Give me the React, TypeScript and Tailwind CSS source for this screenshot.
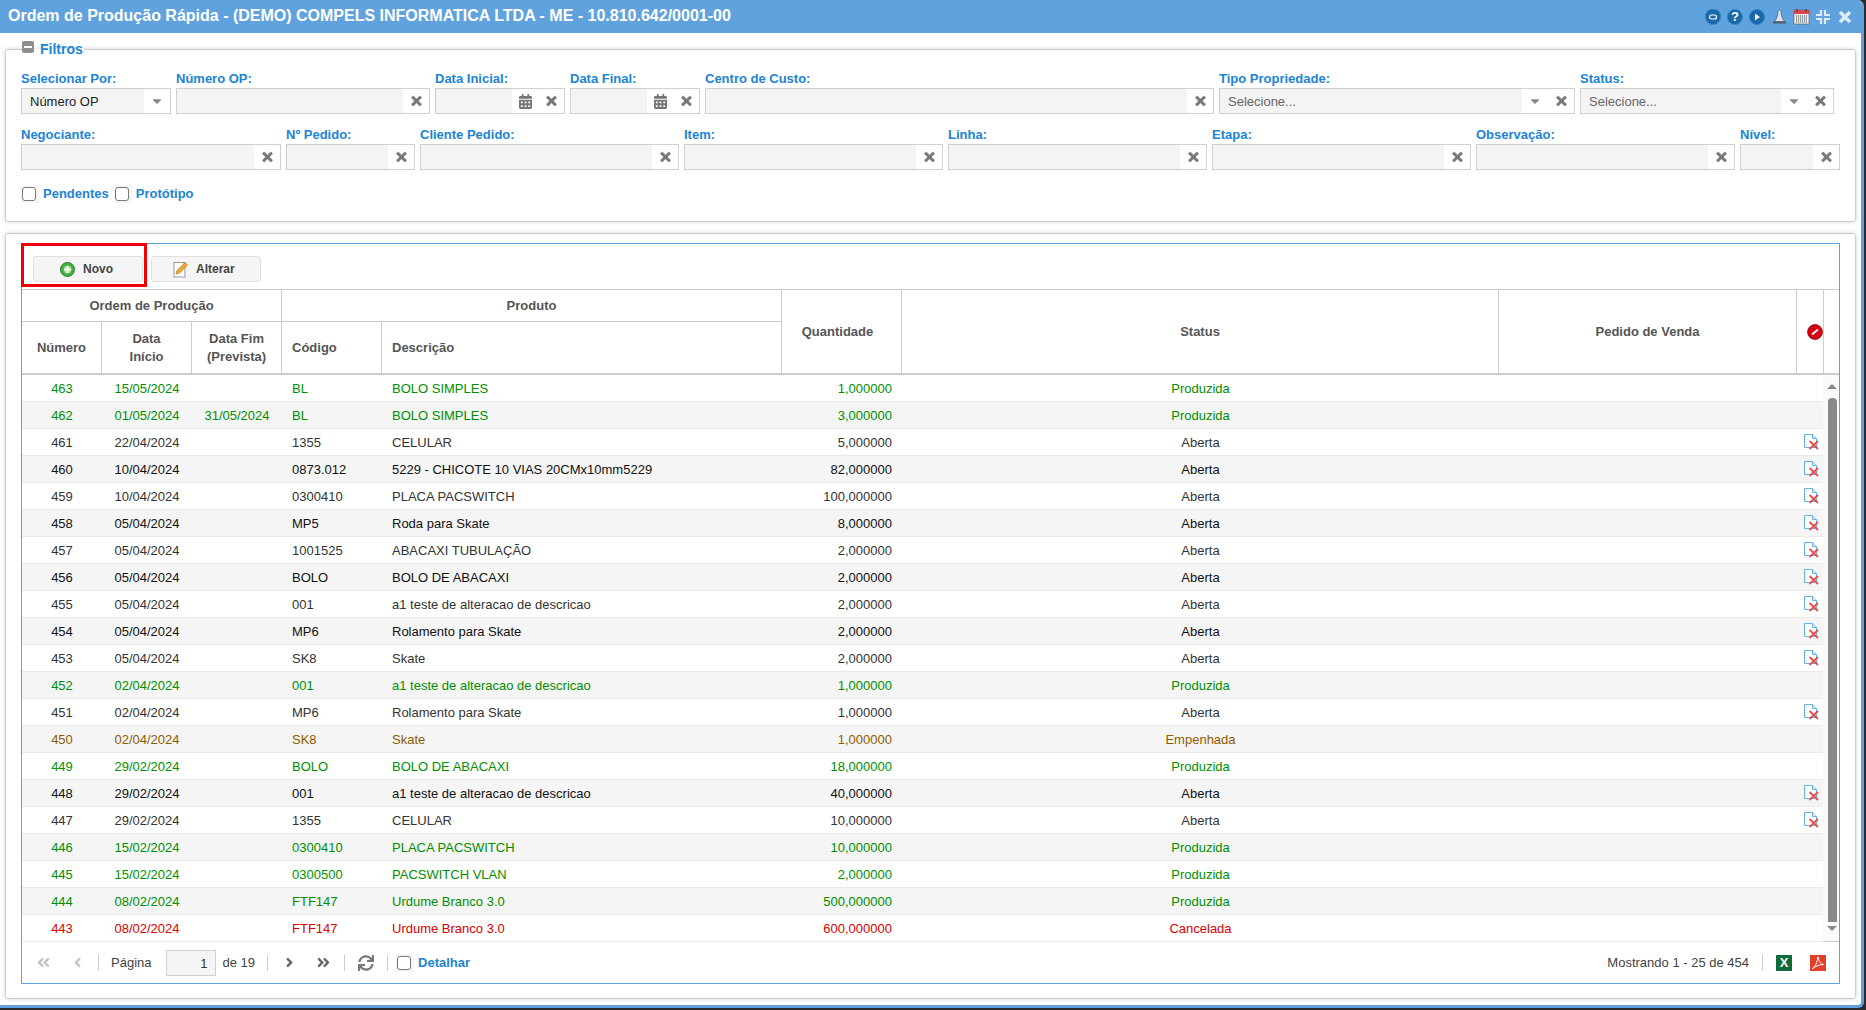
import React from 'react';
import {
  FaAngleDoubleLeft,
  FaAngleDoubleRight,
  FaAngleLeft,
  FaAngleRight,
  FaCalendarAlt,
  FaCaretDown,
  FaSync,
  FaTimes,
} from 'react-icons/fa';

type Row = [string, string, string, string, string, string, string];

const ROWS: Row[] = [
  ['463', '15/05/2024', '', 'BL', 'BOLO SIMPLES', '1,000000', 'Produzida'],
  ['462', '01/05/2024', '31/05/2024', 'BL', 'BOLO SIMPLES', '3,000000', 'Produzida'],
  ['461', '22/04/2024', '', '1355', 'CELULAR', '5,000000', 'Aberta'],
  ['460', '10/04/2024', '', '0873.012', '5229 - CHICOTE 10 VIAS 20CMx10mm5229', '82,000000', 'Aberta'],
  ['459', '10/04/2024', '', '0300410', 'PLACA PACSWITCH', '100,000000', 'Aberta'],
  ['458', '05/04/2024', '', 'MP5', 'Roda para Skate', '8,000000', 'Aberta'],
  ['457', '05/04/2024', '', '1001525', 'ABACAXI TUBULAÇÃO', '2,000000', 'Aberta'],
  ['456', '05/04/2024', '', 'BOLO', 'BOLO DE ABACAXI', '2,000000', 'Aberta'],
  ['455', '05/04/2024', '', '001', 'a1 teste de alteracao de descricao', '2,000000', 'Aberta'],
  ['454', '05/04/2024', '', 'MP6', 'Rolamento para Skate', '2,000000', 'Aberta'],
  ['453', '05/04/2024', '', 'SK8', 'Skate', '2,000000', 'Aberta'],
  ['452', '02/04/2024', '', '001', 'a1 teste de alteracao de descricao', '1,000000', 'Produzida'],
  ['451', '02/04/2024', '', 'MP6', 'Rolamento para Skate', '1,000000', 'Aberta'],
  ['450', '02/04/2024', '', 'SK8', 'Skate', '1,000000', 'Empenhada'],
  ['449', '29/02/2024', '', 'BOLO', 'BOLO DE ABACAXI', '18,000000', 'Produzida'],
  ['448', '29/02/2024', '', '001', 'a1 teste de alteracao de descricao', '40,000000', 'Aberta'],
  ['447', '29/02/2024', '', '1355', 'CELULAR', '10,000000', 'Aberta'],
  ['446', '15/02/2024', '', '0300410', 'PLACA PACSWITCH', '10,000000', 'Produzida'],
  ['445', '15/02/2024', '', '0300500', 'PACSWITCH VLAN', '2,000000', 'Produzida'],
  ['444', '08/02/2024', '', 'FTF147', 'Urdume Branco 3.0', '500,000000', 'Produzida'],
  ['443', '08/02/2024', '', 'FTF147', 'Urdume Branco 3.0', '600,000000', 'Cancelada'],
];

const STATUS_COLOR: Record<string, string> = {
  Produzida: 'text-[#008f00]',
  Empenhada: 'text-[#8f5b00]',
  Cancelada: 'text-[#d80000]',
};

const COLS = 'grid-cols-[80px_90px_90px_100px_400px_120px_597px_298px_26px]';

const ClearIcon = () => <FaTimes className="text-[#777] w-[13px] h-[14px] stroke-[25]" />;

const Addon = ({ children }: { children: React.ReactNode }) => (
  <span className="w-[26px] h-full bg-white flex items-center justify-center shrink-0">{children}</span>
);

type FieldProps = {
  label: string;
  width: string;
  value?: string;
  placeholder?: string;
  kind?: 'text' | 'date' | 'select' | 'combo';
};

const Field = ({ label, width, value, placeholder, kind = 'text' }: FieldProps) => (
  <div className={`${width} shrink-0`}>
    <div className="h-[16px] leading-[16px] text-[13px] font-bold text-[#2084d2] mb-[1px] whitespace-nowrap">{label}</div>
    <div className="h-[26px] border border-[#d0d0d0] bg-[#f4f4f4] flex items-center">
      <span className="flex-1 min-w-0 px-[8px] pt-[1px] text-[13px] text-[#222] truncate">
        {value}
        {placeholder && <span className="text-[#666]">{placeholder}</span>}
      </span>
      {kind === 'date' && (
        <Addon>
          <FaCalendarAlt className="text-[#777] w-[13px] h-[15px]" />
        </Addon>
      )}
      {(kind === 'combo' || kind === 'select') && (
        <Addon>
          <FaCaretDown className="text-[#888] w-[12px] h-[14px]" />
        </Addon>
      )}
      {kind !== 'select' && (
        <Addon>
          <ClearIcon />
        </Addon>
      )}
    </div>
  </div>
);

const CheckBox = () => (
  <span className="w-[18px] h-[18px] bg-[#f5f5f5] flex items-center pl-[1px] shrink-0">
    <span className="w-[14px] h-[14px] rounded-[3px] border border-[#777] bg-white" />
  </span>
);

const DeleteDocIcon = () => (
  <svg width="17" height="17" viewBox="0 0 17 17">
    <path d="M1.5 1.5h8l4 4v9h-12z" fill="#fff" stroke="#63b0ee" strokeWidth="1" />
    <path d="M9.5 1.5v4h4" fill="#dff0fc" stroke="#63b0ee" strokeWidth="1" />
    <path d="M6.500 8l8.500 8M15 8l-8.500 8" stroke="#ea4c4c" strokeWidth="1.800" />
  </svg>
);

const TitleIcons = () => (
  <div className="flex items-center">
    <span className="w-[22px] flex justify-center">
      <svg width="16" height="16" viewBox="0 0 16 16">
        <path d="M8 .5c4 0 7.500 1.500 7.500 7 0 4.500-3.500 8-7.500 8S.5 12 .5 7.500C.5 2 4 .5 8 .5z" fill="#1c68a8" stroke="#2b85c9" />
        <rect x="4.500" y="6" width="7" height="4" rx="2" fill="none" stroke="#fff" strokeWidth="1.200" />
      </svg>
    </span>
    <span className="w-[22px] flex justify-center">
      <span className="w-[16px] h-[16px] rounded-full bg-[#1c68a8] border border-[#2b85c9] text-white text-[13px] font-bold leading-[14px] text-center">?</span>
    </span>
    <span className="w-[22px] flex justify-center">
      <svg width="16" height="16" viewBox="0 0 16 16">
        <circle cx="8" cy="8" r="7.500" fill="#1c68a8" stroke="#2b85c9" />
        <path d="M6 4.500l5 3.500-5 3.500z" fill="#e8f3fb" />
      </svg>
    </span>
    <span className="w-[22px] flex justify-center">
      <svg width="15" height="16" viewBox="0 0 15 16">
        <path d="M7.500 1c1 0 1.400.8 1.600 2 .2 3 .6 6 3.400 9.500h-10C5.300 9 5.700 6 5.900 3c.2-1.200.6-2 1.600-2z" fill="#dbe6ee" stroke="#51606c" strokeWidth=".8" />
        <rect x="1" y="12.500" width="13" height="2" fill="#51606c" />
      </svg>
    </span>
    <span className="w-[22px] flex justify-center">
      <svg width="17" height="17" viewBox="0 0 17 17">
        <rect x="1" y="2" width="15" height="14" fill="#f2f2f2" stroke="#555" strokeWidth=".6" />
        <rect x="1" y="2" width="15" height="4" fill="#d9474f" />
        <path d="M4 1v3M13 1v3" stroke="#444" strokeWidth="1.200" />
        <path d="M3 8h11M3 10h11M3 12h11M3 14h11" stroke="#3d4854" strokeWidth="1" strokeDasharray="1.200 .8" />
      </svg>
    </span>
    <span className="w-[22px] flex justify-center">
      <svg width="16" height="16" viewBox="0 0 16 16" fill="none" stroke="#dcecf9" strokeWidth="2.200">
        <path d="M6 1v5H1M10 1v5h5M6 15v-5H1M10 15v-5h5" />
      </svg>
    </span>
    <span className="w-[22px] flex justify-center">
      <svg width="14" height="14" viewBox="0 0 14 14" stroke="#dcecf9" strokeWidth="3.400">
        <path d="M2 2l10 10M12 2L2 12" />
      </svg>
    </span>
  </div>
);

const HeaderCell = ({ className, children }: { className: string; children: React.ReactNode }) => (
  <div className={`flex items-center font-bold text-[#555] text-[13px] leading-[18px] ${className}`}>{children}</div>
);

export default function App() {
  return (
    <div className="h-[1010px] w-full bg-[#2a2a2a] overflow-hidden font-['Liberation_Sans',Arial,sans-serif]">
      <div className="w-[1864px] h-[1008px] bg-white border-r-[3px] border-b-[3px] border-[#5fa2dd] rounded-tr-[6px] rounded-br-[6px] overflow-hidden">
        {/* barra de titulo */}
        <div className="h-[33px] bg-[#5fa2dd] flex items-center justify-between pl-[8px] pr-[5px]">
          <h1 className="text-white font-bold text-[16px] -mt-[2px] whitespace-nowrap">
            Ordem de Produção Rápida - (DEMO) COMPELS INFORMATICA LTDA - ME - 10.810.642/0001-00
          </h1>
          <TitleIcons />
        </div>

        {/* filtros */}
        <fieldset className="mx-[5px] mt-[8px] h-[181px] border border-[#ccc] rounded-[3px] shadow-[0_0_4px_rgba(0,0,0,0.18)] pl-[15px]">
          <legend className="flex items-center h-[16px] gap-[6px] ml-[1px] pr-[1px]">
            <span className="w-[12px] h-[12px] -mt-[4px] rounded-[2px] bg-[#8f8f8f] flex items-center justify-center">
              <span className="w-[8px] h-[2px] bg-white" />
            </span>
            <span className="text-[14px] font-bold text-[#2084d2]">Filtros</span>
          </legend>
          <div className="flex gap-[5px] mt-[14px]">
            <Field label="Selecionar Por:" width="w-[150px]" value="Número OP" kind="select" />
            <Field label="Número OP:" width="w-[254px]" />
            <Field label="Data Inicial:" width="w-[130px]" kind="date" />
            <Field label="Data Final:" width="w-[130px]" kind="date" />
            <Field label="Centro de Custo:" width="w-[509px]" />
            <Field label="Tipo Propriedade:" width="w-[356px]" placeholder="Selecione..." kind="combo" />
            <Field label="Status:" width="w-[254px]" placeholder="Selecione..." kind="combo" />
          </div>
          <div className="flex gap-[5px] mt-[13px]">
            <Field label="Negociante:" width="w-[260px]" />
            <Field label="Nº Pedido:" width="w-[129px]" />
            <Field label="Cliente Pedido:" width="w-[259px]" />
            <Field label="Item:" width="w-[259px]" />
            <Field label="Linha:" width="w-[259px]" />
            <Field label="Etapa:" width="w-[259px]" />
            <Field label="Observação:" width="w-[259px]" />
            <Field label="Nível:" width="w-[100px]" />
          </div>
          <div className="flex items-center mt-[14px] text-[13px] font-bold text-[#2084d2]">
            <CheckBox />
            <span className="ml-[4px] mr-[5px]">Pendentes</span>
            <CheckBox />
            <span className="ml-[4px]">Protótipo</span>
          </div>
        </fieldset>

        {/* grade */}
        <div className="mx-[5px] mt-[11px] h-[766px] border border-[#ccc] rounded-[3px] shadow-[0_0_4px_rgba(0,0,0,0.18)] pl-[15px] pr-[15px] pt-[9px]">
          <div className="relative h-[741px] border border-[#5fa2dd] flex flex-col">
            {/* destaque vermelho do print */}
            <div className="absolute -left-[1px] -top-[1px] w-[126px] h-[44px] border-[3px] border-[#f00000]" />

            <div className="h-[45px] flex items-end gap-[8px] pl-[11px] pb-[7px] shrink-0">
              <button className="w-[110px] h-[26px] pl-[26px] rounded-[3px] bg-[#f5f5f5] border border-[#e1e1e1] flex items-center gap-[8px] text-[12px] font-bold text-[#444]">
                <svg width="15" height="15" viewBox="0 0 15 15">
                  <circle cx="7.500" cy="7.500" r="7" fill="#46ad42" stroke="#23802a" />
                  <circle cx="7.500" cy="7.500" r="4" fill="#8fdc7e" />
                  <path d="M7.500 4v7M4 7.500h7" stroke="#fff" strokeWidth="2.200" />
                </svg>
                Novo
              </button>
              <button className="w-[110px] h-[26px] pl-[21px] rounded-[3px] bg-[#f5f5f5] border border-[#e1e1e1] flex items-center gap-[7px] text-[12px] font-bold text-[#444]">
                <svg width="16" height="17" viewBox="0 0 16 17">
                  <rect x="1" y="1.500" width="11" height="14.500" fill="#fff" stroke="#999" />
                  <path d="M3 13l1-3.500 8-8 2.500 2.500-8 8z" fill="#f0a830" stroke="#b8761a" strokeWidth=".7" />
                </svg>
                Alterar
              </button>
            </div>

            {/* cabecalho */}
            <div className="border-t border-b-2 border-[#ccc] grid grid-cols-[80px_90px_90px_100px_400px_120px_597px_298px_27px_15px] grid-rows-[32px_51px] shrink-0">
              <HeaderCell className="col-span-3 justify-center border-r border-b border-[#ccc]">Ordem de Produção</HeaderCell>
              <HeaderCell className="col-span-2 justify-center border-r border-b border-[#ccc]">Produto</HeaderCell>
              <HeaderCell className="row-span-2 justify-center pr-[8px] border-r border-[#ccc]">Quantidade</HeaderCell>
              <HeaderCell className="row-span-2 justify-center border-r border-[#ccc]">Status</HeaderCell>
              <HeaderCell className="row-span-2 justify-center border-r border-[#ccc]">Pedido de Venda</HeaderCell>
              <HeaderCell className="row-span-2 justify-end border-r border-[#ccc]">
                <svg width="16" height="16" viewBox="0 0 16 16">
                  <circle cx="8" cy="8" r="7.500" fill="#d80010" stroke="#7d0a10" strokeWidth=".7" />
                  <path d="M5 10.500L11 5.500" stroke="#fff" strokeWidth="2" />
                </svg>
              </HeaderCell>
              <div className="row-span-2" />
              <HeaderCell className="justify-center border-r border-[#ccc]">Número</HeaderCell>
              <HeaderCell className="justify-center text-center border-r border-[#ccc]">
                Data
                <br />
                Início
              </HeaderCell>
              <HeaderCell className="justify-center text-center border-r border-[#ccc]">
                Data Fim
                <br />
                (Prevista)
              </HeaderCell>
              <HeaderCell className="pl-[10px] border-r border-[#ccc]">Código</HeaderCell>
              <HeaderCell className="pl-[10px] border-r border-[#ccc]">Descrição</HeaderCell>
            </div>

            {/* linhas */}
            <div className="flex h-[567px] border-b border-[#ccc] shrink-0">
              <div className="flex-1 min-w-0">
                {ROWS.map((row, i) => {
                  const stripe = i % 2 === 1 ? 'bg-[#f5f5f5]' : 'bg-white';
                  const plain = i % 2 === 1 ? 'text-[#111]' : 'text-[#333]';
                  const color = STATUS_COLOR[row[6]] ?? plain;
                  return (
                    <div
                      key={row[0]}
                      className={`grid ${COLS} h-[27px] pt-[2px] items-center border-b border-[#e9e9e9] text-[13px] whitespace-nowrap ${stripe} ${color}`}
                    >
                      <div className="text-center">{row[0]}</div>
                      <div className="text-center">{row[1]}</div>
                      <div className="text-center">{row[2]}</div>
                      <div className="pl-[10px]">{row[3]}</div>
                      <div className="pl-[10px]">{row[4]}</div>
                      <div className="text-right pr-[10px]">{row[5]}</div>
                      <div className="text-center">{row[6]}</div>
                      <div />
                      <div className="flex justify-end pr-[3px] -mt-[3px]">{row[6] === 'Aberta' && <DeleteDocIcon />}</div>
                    </div>
                  );
                })}
              </div>
              <div className="w-[16px] shrink-0 bg-[#fafafa] flex flex-col items-center pl-[2px]">
                <span className="mt-[9px] w-0 h-0 border-x-[5px] border-x-transparent border-b-[5px] border-b-[#888]" />
                <span className="mt-[9px] w-[9px] h-[524px] rounded-t-[4px] bg-[#8a8a8a]" />
                <span className="mt-[4px] w-0 h-0 border-x-[5px] border-x-transparent border-t-[5px] border-t-[#888]" />
              </div>
            </div>

            {/* rodape */}
            <div className="flex-1 flex items-center text-[13px] text-[#444]">
              <FaAngleDoubleLeft className="ml-[14px] w-[15px] h-[15px] text-[#c4c4c4]" />
              <FaAngleLeft className="ml-[20px] w-[13px] h-[15px] text-[#c4c4c4]" />
              <span className="ml-[14px] w-px h-[16px] bg-[#ccc]" />
              <span className="ml-[12px]">Página</span>
              <span className="ml-[15px] w-[50px] h-[26px] border border-[#d0d0d0] bg-[#f5f5f5] text-right pr-[8px] leading-[26px] text-[#333]">1</span>
              <span className="ml-[6px]">de 19</span>
              <span className="ml-[12px] w-px h-[16px] bg-[#ccc]" />
              <FaAngleRight className="ml-[15px] w-[13px] h-[15px] text-[#666]" />
              <FaAngleDoubleRight className="ml-[20px] w-[15px] h-[15px] text-[#666]" />
              <span className="ml-[13px] w-px h-[16px] bg-[#ccc]" />
              <FaSync className="ml-[13px] w-[16px] h-[16px] text-[#777]" />
              <span className="ml-[13px] w-px h-[16px] bg-[#ccc]" />
              <span className="ml-[8px]">
                <CheckBox />
              </span>
              <span className="ml-[4px] font-bold text-[#2084d2]">Detalhar</span>
              <span className="ml-auto">Mostrando 1 - 25 de 454</span>
              <span className="ml-[13px] w-px h-[16px] bg-[#ccc]" />
              <span className="ml-[13px] w-[16px] h-[16px] bg-[#0f6b3a] text-white text-[13px] font-bold leading-[16px] text-center">X</span>
              <span className="ml-[18px] mr-[13px] w-[16px] h-[16px] bg-[#e2402c] flex items-center justify-center">
                <svg width="14" height="14" viewBox="0 0 14 14" fill="none" stroke="#fff" strokeWidth="1">
                  <path d="M1.500 12.500C4 11 6.500 6 6.500 2c0-1.500 1-1.500 1 0 0 3 3 6.500 5 6.500-3 0-8 1.500-11 4z" />
                </svg>
              </span>
            </div>
          </div>
        </div>
      </div>
    </div>
  );
}
